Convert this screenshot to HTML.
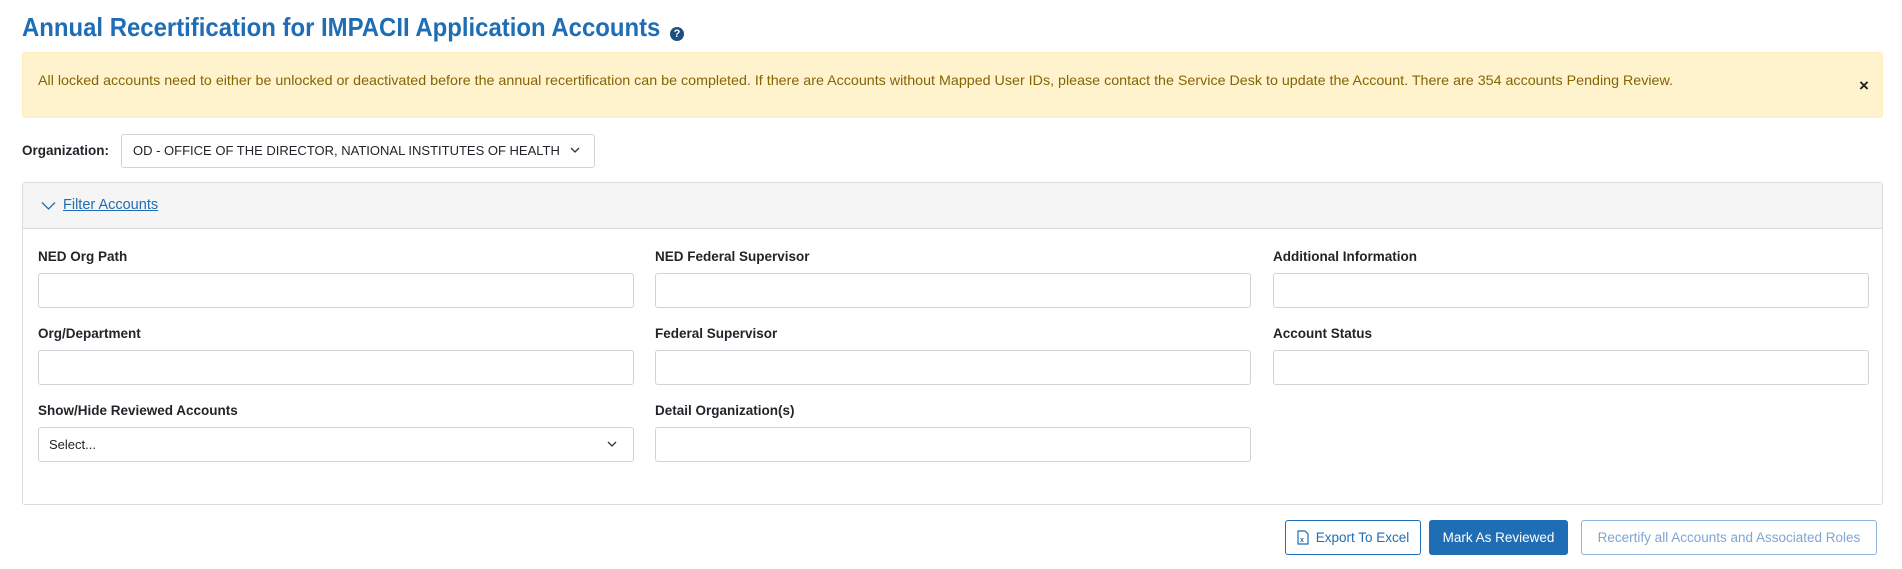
<!DOCTYPE html>
<html><head><meta charset="utf-8"><style>
*{box-sizing:border-box;margin:0;padding:0}
body{width:1902px;height:569px;background:#fff;font-family:"Liberation Sans",sans-serif;position:relative;overflow:hidden;color:#212529}
.a{position:absolute;white-space:nowrap}
.sx{display:inline-block;transform-origin:0 50%}
.inp{position:absolute;height:35px;border:1px solid #ced4da;border-radius:3px;background:#fff}
.lbl{position:absolute;font-size:13.5px;font-weight:bold;color:#212529;white-space:nowrap}
.btn{position:absolute;height:35px;border-radius:3px;font-size:14px;display:flex;align-items:center;justify-content:center;white-space:nowrap}
</style></head><body>
<div class="a" style="left:22px;top:12px;font-size:26px;font-weight:bold;color:#1f6db5;"><span class="sx" style="transform:scaleX(0.92)">Annual Recertification for IMPACII Application Accounts</span></div>
<div class="a" style="left:670px;top:27px;width:14px;height:14px;border-radius:50%;background:#1f4e80;color:#fff;font-size:11px;font-weight:bold;text-align:center;line-height:14px">?</div>

<div class="a" style="left:22px;top:52px;width:1861px;height:66px;background:#fff3cd;border:1px solid #ffeeba;border-radius:3px"></div>
<div class="a" style="left:38px;top:72px;font-size:14px;color:#856404"><span class="sx" style="transform:scaleX(1.02)">All locked accounts need to either be unlocked or deactivated before the annual recertification can be completed. If there are Accounts without Mapped User IDs, please contact the Service Desk to update the Account. There are 354 accounts Pending Review.</span></div>
<div class="a" style="left:1859px;top:76px;font-size:17px;font-weight:bold;color:#222">×</div>

<div class="a" style="left:22px;top:143px;font-size:13.5px;font-weight:bold">Organization:</div>
<div class="inp" style="left:121px;top:134px;width:474px;height:34px"></div>
<div class="a" style="left:133px;top:143px;font-size:13px;color:#212529">OD - OFFICE OF THE DIRECTOR, NATIONAL INSTITUTES OF HEALTH</div>
<svg class="a" style="left:570px;top:146px" width="10" height="8"><path d="M1 2 L5 6 L9 2" fill="none" stroke="#333" stroke-width="1.3"/></svg>

<div class="a" style="left:22px;top:182px;width:1861px;height:323px;border:1px solid #dcdcdc;border-radius:3px"></div>
<div class="a" style="left:23px;top:183px;width:1859px;height:46px;background:#f5f5f5;border-bottom:1px solid #dcdcdc"></div>
<svg class="a" style="left:41px;top:201px" width="15" height="10"><path d="M1 1.5 L7.5 8 L14 1.5" fill="none" stroke="#1f6db5" stroke-width="1.3"/></svg>
<div class="a" style="left:63px;top:197px;font-size:14.5px;color:#1f6db5;text-decoration:underline">Filter Accounts</div>

<div class="lbl" style="left:38px;top:249px">NED Org Path</div>
<div class="lbl" style="left:655px;top:249px">NED Federal Supervisor</div>
<div class="lbl" style="left:1273px;top:249px">Additional Information</div>
<div class="inp" style="left:38px;top:273px;width:596px"></div>
<div class="inp" style="left:655px;top:273px;width:596px"></div>
<div class="inp" style="left:1273px;top:273px;width:596px"></div>

<div class="lbl" style="left:38px;top:326px">Org/Department</div>
<div class="lbl" style="left:655px;top:326px">Federal Supervisor</div>
<div class="lbl" style="left:1273px;top:326px">Account Status</div>
<div class="inp" style="left:38px;top:350px;width:596px"></div>
<div class="inp" style="left:655px;top:350px;width:596px"></div>
<div class="inp" style="left:1273px;top:350px;width:596px"></div>

<div class="lbl" style="left:38px;top:403px">Show/Hide Reviewed Accounts</div>
<div class="lbl" style="left:655px;top:403px">Detail Organization(s)</div>
<div class="inp" style="left:38px;top:427px;width:596px"></div>
<div class="a" style="left:49px;top:437px;font-size:13px">Select...</div>
<svg class="a" style="left:607px;top:440px" width="10" height="8"><path d="M1 2 L5 6 L9 2" fill="none" stroke="#333" stroke-width="1.3"/></svg>
<div class="inp" style="left:655px;top:427px;width:596px"></div>

<div class="btn" style="left:1285px;top:520px;width:136px;border:1px solid #1f6db5;color:#1f6db5;font-size:13.5px">
<svg width="12" height="15" style="margin-right:7px"><path d="M1 1 H8 L11 4 V14 H1 Z" fill="none" stroke="#1f6db5" stroke-width="1.2"/><text x="3" y="12" font-size="7" font-family="Liberation Sans" fill="#1f6db5" font-weight="bold">x</text></svg>Export To Excel</div>
<div class="btn" style="left:1429px;top:520px;width:139px;background:#1f6db5;color:#fff;font-size:13.5px">Mark As Reviewed</div>
<div class="btn" style="left:1581px;top:520px;width:296px;border:1px solid #8fb4dc;color:#7fa6d1;font-size:13.5px">Recertify all Accounts and Associated Roles</div>
</body></html>
